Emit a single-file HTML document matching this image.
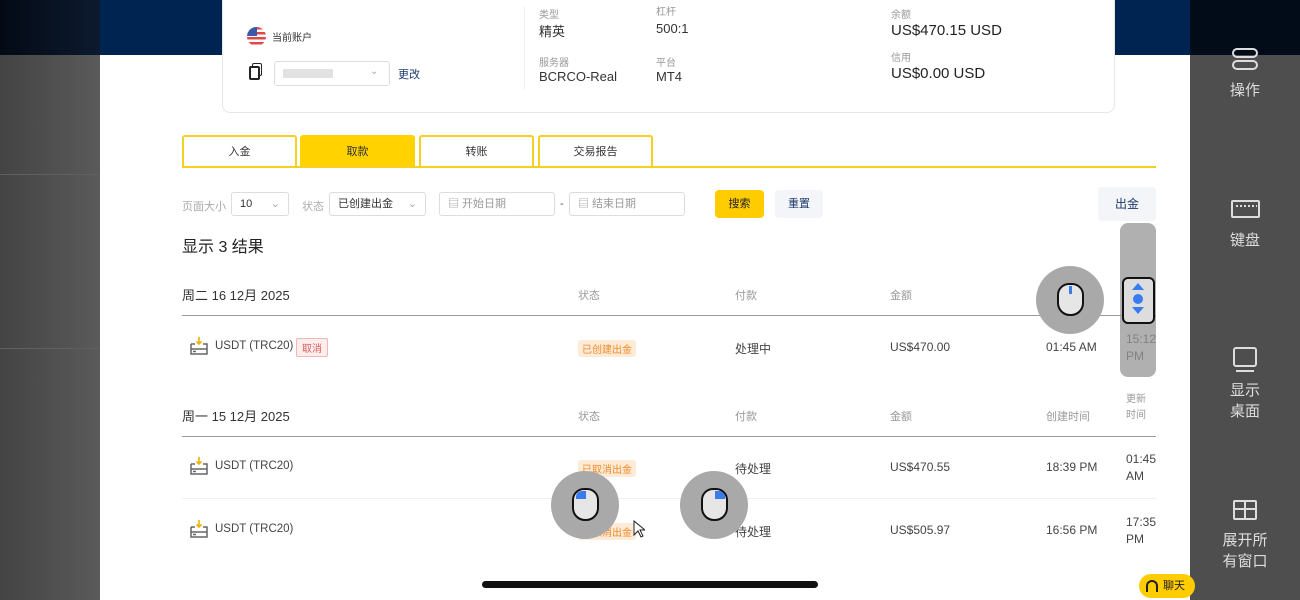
<!DOCTYPE html>
<html><head><meta charset="utf-8"><style>
*{margin:0;padding:0;box-sizing:border-box}
body{width:1300px;height:600px;overflow:hidden;position:relative;background:#fff;font-family:"Liberation Sans","Noto Sans CJK SC",sans-serif;color:#333}
.a{position:absolute;white-space:nowrap}
.lbl{font-size:10px;color:#999}
.val{font-size:13px;color:#333}
.hd{font-size:11px;color:#999}
.cell{font-size:12px;color:#444}
.usdt{font-size:11.5px;color:#444}
.tab{position:absolute;top:135px;height:32px;border:2px solid #f5d020;border-bottom:none;font-size:11px;text-align:center;line-height:30px;color:#333;border-radius:3px 3px 0 0}
.inp{position:absolute;top:192px;height:24px;border:1px solid #ddd;border-radius:3px;font-size:11px;color:#999;line-height:22px;padding-left:8px}
.tag{position:absolute;font-size:10px;color:#f08a24;background:#fdebd8;padding:1px 4px;border-radius:3px}
.pkg{position:absolute;width:20px;height:18px}
.side{position:absolute;color:#ddd;font-size:15px;text-align:center;width:110px;left:1190px;line-height:21px}
.mouse{position:absolute;width:68px;height:68px;border-radius:50%;background:#a9a9a9}
.mouse i{position:absolute;left:21px;top:17px;width:27px;height:33px;border:2px solid #111;border-radius:12px 12px 13px 13px;background:#e6e6e6}
</style></head><body>
<div class="a" style="left:0;top:0;width:1300px;height:55px;background:#002452"></div>
<div class="a" style="left:0;top:0;width:100px;height:55px;background:linear-gradient(90deg,#030a16,#0d1a2e)"></div>
<div class="a" style="left:0;top:55px;width:100px;height:545px;background:linear-gradient(90deg,#444,#5a5a5a)"></div>
<div class="a" style="left:0;top:174px;width:100px;height:1px;background:#606060"></div>
<div class="a" style="left:0;top:348px;width:100px;height:1px;background:#606060"></div>
<div class="a" style="left:1190px;top:0;width:110px;height:55px;background:#020b18"></div>
<div class="a" style="left:1190px;top:55px;width:110px;height:545px;background:#4e4e4e"></div>

<!-- card -->
<div class="a" style="left:222px;top:-10px;width:893px;height:123px;background:#fff;border:1px solid #e6e6e6;border-radius:8px"></div>
<div class="a" style="left:247px;top:27px;width:19px;height:19px;border-radius:50%;background:repeating-linear-gradient(#e04848 0 2.5px,#fff 2.5px 5px);overflow:hidden"><div style="width:10px;height:9px;background:#3a5aa8"></div></div>
<div class="a" style="left:272px;top:29px;font-size:10px;color:#333">当前账户</div>
<div class="a" style="left:252px;top:63px;width:10px;height:13px;border:1.5px solid #222;border-radius:2px"></div>
<div class="a" style="left:249px;top:66px;width:11px;height:14px;border:2px solid #222;border-radius:2px;background:#fff"></div>
<div class="a" style="left:274px;top:61px;width:116px;height:25px;border:1px solid #ddd;border-radius:3px"></div>
<div class="a" style="left:283px;top:69px;width:50px;height:9px;background:#e2e2e2"></div>
<div class="a" style="left:370px;top:66px;font-size:10px;color:#aaa">⌄</div>
<div class="a" style="left:398px;top:66px;font-size:11px;color:#1d3a6a">更改</div>
<div class="a" style="left:524px;top:6px;width:1px;height:84px;background:#eee"></div>
<div class="a lbl" style="left:539px;top:6px">类型</div>
<div class="a val" style="left:539px;top:21px">精英</div>
<div class="a lbl" style="left:656px;top:3px">杠杆</div>
<div class="a val" style="left:656px;top:21px">500:1</div>
<div class="a lbl" style="left:539px;top:54px">服务器</div>
<div class="a val" style="left:539px;top:69px">BCRCO-Real</div>
<div class="a lbl" style="left:656px;top:54px">平台</div>
<div class="a val" style="left:656px;top:69px">MT4</div>
<div class="a lbl" style="left:891px;top:6px">余额</div>
<div class="a" style="left:891px;top:22px;font-size:15px;color:#222">US$470.15 USD</div>
<div class="a lbl" style="left:891px;top:49px">信用</div>
<div class="a" style="left:891px;top:65px;font-size:15px;color:#222">US$0.00 USD</div>

<!-- tabs -->
<div class="tab" style="left:182px;width:115px">入金</div>
<div class="tab" style="left:300px;width:115px;background:#ffd200;border-color:#ffd200">取款</div>
<div class="tab" style="left:419px;width:115px">转账</div>
<div class="tab" style="left:538px;width:115px">交易报告</div>
<div class="a" style="left:182px;top:166px;width:974px;height:2px;background:#f5d020"></div>

<!-- filters -->
<div class="a" style="left:182px;top:198px;font-size:11px;color:#aaa">页面大小</div>
<div class="inp" style="left:231px;width:58px;color:#333">10 <span style="position:absolute;right:8px;color:#aaa">⌄</span></div>
<div class="a" style="left:302px;top:198px;font-size:11px;color:#aaa">状态</div>
<div class="inp" style="left:329px;width:97px;color:#333">已创建出金 <span style="position:absolute;right:8px;color:#aaa">⌄</span></div>
<div class="inp" style="left:439px;width:116px">▤ 开始日期</div>
<div class="a" style="left:560px;top:198px;font-size:11px;color:#555">-</div>
<div class="inp" style="left:569px;width:116px">▤ 结束日期</div>
<div class="a" style="left:715px;top:190px;width:49px;height:28px;background:#ffcc00;border-radius:4px;font-size:11px;text-align:center;line-height:28px;color:#222">搜索</div>
<div class="a" style="left:775px;top:190px;width:48px;height:28px;background:#f3f5f8;border-radius:4px;font-size:11px;text-align:center;line-height:28px;color:#1d3a6a">重置</div>
<div class="a" style="left:1098px;top:187px;width:58px;height:34px;background:#f3f5f8;border-radius:4px;font-size:12px;text-align:center;line-height:34px;color:#1d3a6a">出金</div>

<div class="a" style="left:182px;top:233px;font-size:16px;color:#222">显示 3 结果</div>

<!-- group 1 -->
<div class="a" style="left:182px;top:285px;font-size:13px;color:#333">周二 16 12月 2025</div>
<div class="a hd" style="left:578px;top:287px">状态</div>
<div class="a hd" style="left:735px;top:287px">付款</div>
<div class="a hd" style="left:890px;top:287px">金额</div>
<div class="a hd" style="left:1046px;top:287px">创建时间</div>
<div class="a" style="left:182px;top:315px;width:974px;height:1px;background:#999"></div>
<div class="a" style="left:182px;top:436px;width:974px;height:1px;background:#999"></div>

<div class="a usdt" style="left:215px;top:340px">USDT (TRC20)</div>
<div class="a" style="left:296px;top:338px;font-size:10px;color:#e05a5a;border:1px solid #f3b5b5;background:#fdeeee;padding:1px 5px;border-radius:2px">取消</div>
<div class="tag" style="left:578px;top:340px">已创建出金</div>
<div class="a cell" style="left:735px;top:340px">处理中</div>
<div class="a cell" style="left:890px;top:340px">US$470.00</div>
<div class="a cell" style="left:1046px;top:340px">01:45 AM</div>
<div class="a cell" style="left:1126px;top:331px;line-height:17px">15:12<br>PM</div>

<!-- group 2 -->
<div class="a" style="left:182px;top:406px;font-size:13px;color:#333">周一 15 12月 2025</div>
<div class="a hd" style="left:578px;top:408px">状态</div>
<div class="a hd" style="left:735px;top:408px">付款</div>
<div class="a hd" style="left:890px;top:408px">金额</div>
<div class="a hd" style="left:1046px;top:408px">创建时间</div>
<div class="a hd" style="left:1126px;top:392px;line-height:16px;font-size:10px">更新<br>时间</div>
<div class="a" style="left:182px;top:498px;width:974px;height:1px;background:#f0f0f0"></div>

<div class="a usdt" style="left:215px;top:460px">USDT (TRC20)</div>
<div class="tag" style="left:578px;top:460px">已取消出金</div>
<div class="a cell" style="left:735px;top:460px">待处理</div>
<div class="a cell" style="left:890px;top:460px">US$470.55</div>
<div class="a cell" style="left:1046px;top:460px">18:39 PM</div>
<div class="a cell" style="left:1126px;top:451px;line-height:17px">01:45<br>AM</div>

<div class="a usdt" style="left:215px;top:523px">USDT (TRC20)</div>
<div class="tag" style="left:578px;top:523px">已取消出金</div>
<div class="a cell" style="left:735px;top:523px">待处理</div>
<div class="a cell" style="left:890px;top:523px">US$505.97</div>
<div class="a cell" style="left:1046px;top:523px">16:56 PM</div>
<div class="a cell" style="left:1126px;top:514px;line-height:17px">17:35<br>PM</div>

<!-- package icons -->
<svg class="pkg" style="left:189px;top:337px" viewBox="0 0 20 18"><path d="M2 7h4M14 7h4v10H2V7M2 12h16M4 14.5h3" fill="none" stroke="#666" stroke-width="1.5"/><path d="M10 0v7M7.5 4.5l2.5 2.5 2.5-2.5" fill="none" stroke="#f0b400" stroke-width="1.6"/></svg>
<svg class="pkg" style="left:189px;top:457px" viewBox="0 0 20 18"><path d="M2 7h4M14 7h4v10H2V7M2 12h16M4 14.5h3" fill="none" stroke="#666" stroke-width="1.5"/><path d="M10 0v7M7.5 4.5l2.5 2.5 2.5-2.5" fill="none" stroke="#f0b400" stroke-width="1.6"/></svg>
<svg class="pkg" style="left:189px;top:520px" viewBox="0 0 20 18"><path d="M2 7h4M14 7h4v10H2V7M2 12h16M4 14.5h3" fill="none" stroke="#666" stroke-width="1.5"/><path d="M10 0v7M7.5 4.5l2.5 2.5 2.5-2.5" fill="none" stroke="#f0b400" stroke-width="1.6"/></svg>

<!-- overlays -->
<div class="a" style="left:1120px;top:223px;width:36px;height:154px;background:rgba(150,150,150,.75);border-radius:8px"></div>
<div class="a" style="left:1122px;top:277px;width:33px;height:47px;border:2px solid #111;border-radius:6px;background:#ddd"></div>
<div class="a" style="left:1132px;top:283px;width:0;height:0;border-left:6px solid transparent;border-right:6px solid transparent;border-bottom:7px solid #3a7bf0"></div>
<div class="a" style="left:1133px;top:294px;width:10px;height:10px;border-radius:50%;background:#3a7bf0"></div>
<div class="a" style="left:1132px;top:307px;width:0;height:0;border-left:6px solid transparent;border-right:6px solid transparent;border-top:7px solid #3a7bf0"></div>
<div class="mouse" style="left:1036px;top:266px"><i></i><b style="position:absolute;left:33px;top:20px;width:3px;height:8px;background:#3a7bf0"></b></div>
<div class="mouse" style="left:551px;top:471px"><i></i><b style="position:absolute;left:25px;top:20px;width:10px;height:8px;background:#3a7bf0;border-radius:6px 0 0 0"></b></div>
<div class="mouse" style="left:680px;top:471px"><i></i><b style="position:absolute;left:35px;top:20px;width:10px;height:8px;background:#3a7bf0;border-radius:0 6px 0 0"></b></div>
<svg class="a" style="left:633px;top:520px" width="12" height="18" viewBox="0 0 12 18"><path d="M1 1v14l4-4 3 6 2-1-3-6h5z" fill="#fff" stroke="#222"/></svg>
<div class="a" style="left:482px;top:581px;width:336px;height:7px;border-radius:4px;background:#111"></div>
<div class="a" style="left:1139px;top:574px;width:56px;height:24px;border-radius:12px;background:#ffcc00;font-size:11px;line-height:24px;padding-left:24px;color:#222">聊天</div>
<div class="a" style="left:1146px;top:580px;width:12px;height:12px;border:2.5px solid #222;border-bottom:none;border-radius:6px 6px 0 0"></div>

<!-- right side -->
<div class="a" style="left:1232px;top:48px;width:26px;height:10px;border:2px solid #ddd;border-radius:5px"></div>
<div class="a" style="left:1232px;top:60px;width:26px;height:10px;border:2px solid #ddd;border-radius:5px"></div>
<div class="side" style="top:80px">操作</div>
<div class="a" style="left:1231px;top:200px;width:29px;height:18px;border:2px solid #ddd;border-radius:2px;background:repeating-linear-gradient(90deg,#ddd 0 2px,transparent 2px 4px) 3px 3px/21px 2px no-repeat"></div>
<div class="side" style="top:230px">键盘</div>
<div class="a" style="left:1233px;top:347px;width:24px;height:20px;border:2px solid #ddd;border-radius:3px"></div>
<div class="a" style="left:1236px;top:370px;width:18px;height:2px;background:#ddd"></div>
<div class="side" style="top:380px">显示<br>桌面</div>
<div class="a" style="left:1233px;top:500px;width:24px;height:20px;border:2px solid #ddd;border-radius:2px"></div>
<div class="a" style="left:1235px;top:508px;width:20px;height:2px;background:#ddd"></div>
<div class="a" style="left:1244px;top:500px;width:2px;height:20px;background:#ddd"></div>
<div class="side" style="top:530px">展开所<br>有窗口</div>
</body></html>
